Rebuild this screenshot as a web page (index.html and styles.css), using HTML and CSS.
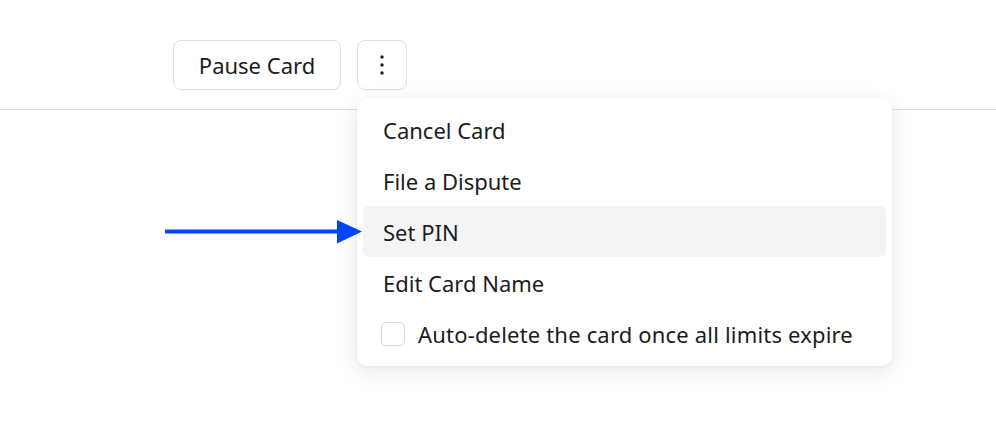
FILE: index.html
```html
<!DOCTYPE html>
<html>
<head>
<meta charset="utf-8">
<link rel="stylesheet" href="styles.css">
</head>
<body>
<div class="page">
  <header class="header">
    <div class="actions">
      <button class="btn btn-text">Pause Card</button>
      <div class="menu-anchor">
        <button class="btn btn-icon" aria-label="More">
          <svg width="4" height="20" viewBox="0 0 4 20"><circle cx="2" cy="2" r="1.7" fill="#1f1f1f"/><circle cx="2" cy="10" r="1.7" fill="#1f1f1f"/><circle cx="2" cy="18" r="1.7" fill="#1f1f1f"/></svg>
        </button>
        <div class="menu">
          <div class="menu-item">Cancel Card</div>
          <div class="menu-item">File a Dispute</div>
          <div class="menu-item active">Set PIN</div>
          <div class="menu-item">Edit Card Name</div>
          <label class="menu-item check-item"><span class="checkbox"></span><span class="check-label">Auto-delete the card once all limits expire</span></label>
        </div>
      </div>
    </div>
  </header>
  <svg class="arrow" width="200" height="26" viewBox="0 0 200 26">
    <rect x="0" y="10.5" width="175" height="4" fill="#0044ff"/>
    <polygon points="172,1 197,12.5 172,24.5" fill="#0044ff"/>
  </svg>
</div>
</body>
</html>
```
FILE: styles.css
```css
* { box-sizing: border-box; }
html, body { margin: 0; padding: 0; background: #fff; }
body {
  font-family: "Noto Sans", "Open Sans", sans-serif;
  color: #1c1c1c;
  width: 996px;
  height: 436px;
  overflow: hidden;
}
.page { position: relative; height: 436px; }
.header {
  padding: 40px 0 19px 173px;
  border-bottom: 1px solid #dcdcdc;
}
.actions {
  display: flex;
  gap: 16px;
  align-items: flex-start;
}
.btn {
  font-family: inherit;
  background: #fff;
  border: 1px solid #dedede;
  border-radius: 8px;
  height: 50px;
  color: #1c1c1c;
  cursor: pointer;
  margin: 0;
}
.btn-text {
  width: 168px;
  font-size: 22px;
  padding: 0;
  line-height: 1;
}
.btn-icon {
  width: 50px;
  padding: 0;
  display: flex;
  align-items: center;
  justify-content: center;
}
.menu-anchor { position: relative; }
.menu {
  position: absolute;
  top: 58px;
  left: 0;
  width: 535px;
  background: #fff;
  border-radius: 10px;
  padding: 6px 6px 7px;
  box-shadow: 0 6px 24px rgba(0, 0, 0, 0.09), 0 1px 4px rgba(0, 0, 0, 0.05);
  z-index: 2;
}
.menu-item {
  height: 51px;
  display: flex;
  align-items: center;
  padding: 0 20px;
  font-size: 22px;
  border-radius: 6px;
  white-space: nowrap;
}
.menu-item.active { background: #f4f4f4; }
.check-item { gap: 13px; padding-left: 18px; }
.check-label { letter-spacing: 0.18px; }
.checkbox {
  width: 24px;
  height: 24px;
  border: 1px solid #d9d9d9;
  border-radius: 5px;
  background: #fff;
  flex: none;
}
.arrow {
  position: absolute;
  left: 165px;
  top: 219px;
  z-index: 3;
}
```
